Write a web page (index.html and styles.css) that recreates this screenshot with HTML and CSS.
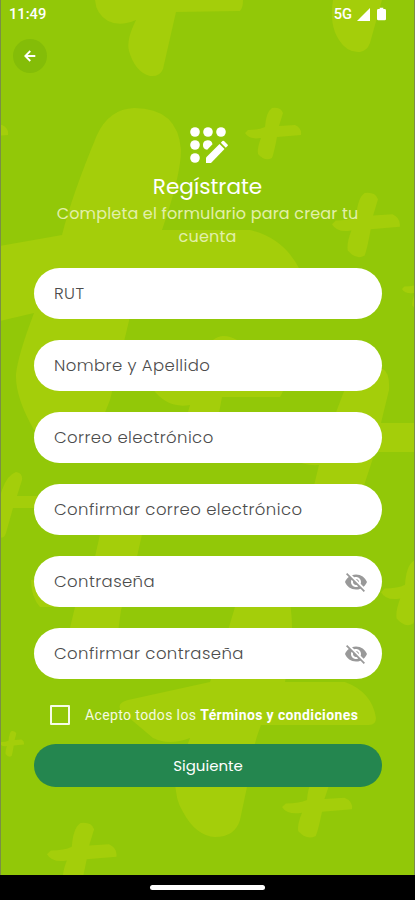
FILE: index.html
```html
<!DOCTYPE html>
<html lang="es">
<head>
    <meta charset="UTF-8">
    <meta name="viewport" content="width=device-width, initial-scale=1.0">
    <title>Regístrate</title>
    <link rel="stylesheet" href="styles.css">
</head>
<body>
    <div class="screen">
        <!-- background pattern -->
        <svg class="pattern" viewBox="0 0 415 875" aria-hidden="true">
            <defs>
                <path id="plus" d="M0 25L3 22Q14 22 20 19Q21 4 27 0Q36-1 38 5L34 18L50 17Q57 20 56 27L32 29Q29 45 27 50Q20 54 13 46Q12 40 16 30Q4 32 0 25Z"/>
            </defs>
            <path d="M95 0Q96 14 108 21Q120 27 136 20Q126 40 129 51Q135 72 150 76Q160 77 163 69L176 12L240 11Q243 8 243 0Z"/>
            <path d="M333 0Q329 25 339 40Q347 53 360 52Q367 51 370 43L382 0Z"/>
            <path d="M0 246L62 235Q72 195 97 135Q109 109 134 108Q178 108 181 150Q181 175 162 230L250 230Q284 238 300 270L300 300L134 300L110 400L98 430H34Q15 397 16 374Q18 355 34 313L0 321Z"/>
            <path d="M213 340Q223 332 237 340L228 364L276 364Q292 376 280 397L222 397L214 440H180L190 405Q167 409 152 388L150 370L202 364Z"/>
            <path d="M346 386Q360 367 383 369Q390 373 389 390L381 423H415V452H375L356 510H308L319 465Q305 466 294 460L290 430L332 423Z"/>
            <path d="M2 490Q7 475 16 472Q23 473 22 480L17 496H40V508H13L6 533Q4 539 0 537V497Z"/>
            <path d="M101 530L143 530L134 570L121 610L117 640H67L75 607H40Q31 597 31 580L92 570Z"/>
            <path d="M240 590H287Q293 610 292 640L285 682H345Q372 692 376 718Q376 725 369 725H261Q251 750 247 787L240 820Q235 837 215 837Q196 836 183 812Q175 800 175 778L190 738Q169 746 153 738L121 711Q116 703 128 700L210 682L229 627Z"/>
            <use href="#plus" x="245" y="108"/>
            <use href="#plus" transform="translate(332 193) scale(1.21 1.25)"/>
            <use href="#plus" transform="translate(282 778) scale(1.25 1.16)"/>
            <use href="#plus" transform="translate(47 823) scale(1.24 1.25)"/>
            <use href="#plus" transform="translate(0 731) scale(.43 .5)"/>
            <use href="#plus" transform="translate(381 561) scale(1.2 1.25)"/>
            <use href="#plus" transform="translate(402 269) scale(.8)"/>
            <use href="#plus" transform="translate(-48 108)"/>
        </svg>

        <div class="status-bar">
            <span class="time">11:49</span>
            <div class="status-icons">
                <span>5G</span>
                <svg class="signal" viewBox="0 0 13 13"><path d="M13 0V13H0Z"/></svg>
                <svg class="battery" viewBox="0 0 10 14"><path d="M3 0H7V1.5H8.5Q10 1.5 10 3V12.5Q10 14 8.5 14H1.5Q0 14 0 12.5V3Q0 1.5 1.5 1.5H3Z"/></svg>
            </div>
        </div>

        <button class="back" aria-label="Volver">
            <svg viewBox="0 0 12 12"><path d="M11.3 6H1.5M6.3 1L1.3 6L6.3 11"/></svg>
        </button>

        <div class="header">
            <svg class="logo" viewBox="0 0 38 37">
                <circle cx="5" cy="5" r="4.8"/>
                <circle cx="18" cy="5" r="4.8"/>
                <circle cx="31" cy="5" r="4.8"/>
                <circle cx="5" cy="18" r="4.8"/>
                <path d="M22.5 17.2L17.2 22.7A4.8 4.8 0 1 1 22.5 17.2Z"/>
                <circle cx="5" cy="31" r="4.8"/>
                <path d="M16 30.5L29.5 17L34.5 22L21 36H16Z"/>
                <path d="M30.8 15.7L32.4 14Q33.2 13.3 34 14L37.5 17.4Q38.3 18.2 37.5 19L35.8 20.7Z"/>
            </svg>
            <h1>Regístrate</h1>
            <p>Completa el formulario para crear tu<br>cuenta</p>
        </div>

        <form class="form">
            <div class="field">
                <input type="text" placeholder="RUT">
            </div>
            <div class="field">
                <input type="text" placeholder="Nombre y Apellido">
            </div>
            <div class="field">
                <input type="text" placeholder="Correo electrónico">
            </div>
            <div class="field">
                <input type="text" placeholder="Confirmar correo electrónico">
            </div>
            <div class="field">
                <input type="password" placeholder="Contraseña">
                <svg class="eye" viewBox="0 0 24 24"><path d="M12 7c2.76 0 5 2.24 5 5 0 .65-.13 1.26-.36 1.83l2.92 2.92c1.51-1.26 2.7-2.89 3.43-4.75-1.73-4.39-6-7.5-11-7.5-1.4 0-2.74.25-3.98.7l2.16 2.16C10.74 7.13 11.35 7 12 7zM2 4.27l2.28 2.28.46.46C3.08 8.3 1.78 10.02 1 12c1.73 4.39 6 7.5 11 7.5 1.55 0 3.03-.3 4.38-.84l.42.42L19.73 22 21 20.73 3.27 3 2 4.27zM7.53 9.8l1.55 1.55c-.05.21-.08.43-.08.65 0 1.66 1.34 3 3 3 .22 0 .44-.03.65-.08l1.55 1.55c-.67.33-1.41.53-2.2.53-2.76 0-5-2.24-5-5 0-.79.2-1.53.53-2.2zm4.31-.78l3.15 3.15.02-.16c0-1.66-1.34-3-3-3l-.17.01z"/></svg>
            </div>
            <div class="field">
                <input type="password" placeholder="Confirmar contraseña">
                <svg class="eye" viewBox="0 0 24 24"><path d="M12 7c2.76 0 5 2.24 5 5 0 .65-.13 1.26-.36 1.83l2.92 2.92c1.51-1.26 2.7-2.89 3.43-4.75-1.73-4.39-6-7.5-11-7.5-1.4 0-2.74.25-3.98.7l2.16 2.16C10.74 7.13 11.35 7 12 7zM2 4.27l2.28 2.28.46.46C3.08 8.3 1.78 10.02 1 12c1.73 4.39 6 7.5 11 7.5 1.55 0 3.03-.3 4.38-.84l.42.42L19.73 22 21 20.73 3.27 3 2 4.27zM7.53 9.8l1.55 1.55c-.05.21-.08.43-.08.65 0 1.66 1.34 3 3 3 .22 0 .44-.03.65-.08l1.55 1.55c-.67.33-1.41.53-2.2.53-2.76 0-5-2.24-5-5 0-.79.2-1.53.53-2.2zm4.31-.78l3.15 3.15.02-.16c0-1.66-1.34-3-3-3l-.17.01z"/></svg>
            </div>
            <label class="terms">
                <input type="checkbox">
                <span>Acepto todos los <b>Términos y condiciones</b></span>
            </label>
            <button class="submit" type="button">Siguiente</button>
        </form>
    </div>
    <div class="nav-bar">
        <div class="handle"></div>
    </div>
</body>
</html>
```
FILE: styles.css
```css
* {
    box-sizing: border-box;
}

body {
    margin: 0;
    height: 900px;
    display: flex;
    flex-direction: column;
    font-family: Poppins, Inter, sans-serif;
    background: #000;
    overflow: hidden;
}

.screen {
    position: relative;
    height: 875px;
    background: #92c808;
    border-left: 1px solid #7a8f45;
    border-right: 1px solid #7a8f45;
    overflow: hidden;
    isolation: isolate;
}

.pattern {
    position: absolute;
    top: 0;
    left: -1px;
    width: 415px;
    height: 875px;
    fill: #a4ce0a;
    z-index: -1;
}

.status-bar {
    display: flex;
    justify-content: space-between;
    align-items: center;
    height: 27px;
    padding: 1px 28px 0 8px;
    color: #fff;
    font: 500 14.7px/26px Roboto, sans-serif;
}

.status-icons {
    display: flex;
    align-items: center;
    gap: 5px;
}

.status-icons svg {
    fill: #fff;
}

.signal {
    width: 13px;
    height: 13px;
}

.battery {
    width: 9px;
    height: 14px;
    margin-left: 2px;
}

.back {
    display: flex;
    align-items: center;
    justify-content: center;
    width: 34px;
    height: 34px;
    margin: 12px 0 0 12px;
    padding: 0;
    border: none;
    border-radius: 50%;
    background: #84bd08;
}

.back svg {
    width: 12px;
    height: 12px;
    fill: none;
    stroke: #fff;
    stroke-width: 1.8;
}

.header {
    display: flex;
    flex-direction: column;
    align-items: center;
    margin-top: 54px;
    text-align: center;
    color: #fff;
}

.logo {
    width: 38px;
    height: 37px;
    margin-left: 3px;
    fill: #fff;
}

.header h1 {
    margin: 8px 0 0;
    font-size: 21.6px;
    font-weight: 400;
    line-height: 30px;
}

.header p {
    margin: 0;
    color: #e2f0aa;
    font-size: 16px;
    line-height: 23px;
    letter-spacing: 0.17px;
}

.form {
    display: flex;
    flex-direction: column;
    gap: 21px;
    margin: 20px 32px 0 33px;
}

.field {
    display: flex;
    align-items: center;
    height: 51px;
    padding: 0 14px 0 20px;
    border-radius: 26px;
    background: #fff;
}

.field input {
    flex: 1;
    min-width: 0;
    padding: 0;
    border: none;
    outline: none;
    background: transparent;
    font-family: inherit;
    font-size: 16.5px;
    font-weight: 300;
    letter-spacing: 0.4px;
}

.field input::placeholder {
    color: #4c4c4c;
    opacity: 1;
}

.eye {
    width: 24px;
    height: 24px;
    fill: #999;
}

.terms {
    display: flex;
    align-items: center;
    gap: 15px;
    height: 30px;
    padding-left: 16px;
    color: #f5fae0;
    font: 400 14px/20px Roboto, sans-serif;
    letter-spacing: 0.38px;
}

.terms input {
    appearance: none;
    width: 20px;
    height: 20px;
    margin: 0;
    border: 2px solid #f5fbe6;
    border-radius: 1px;
}

.terms b {
    color: #fff;
    font-weight: 700;
}

.submit {
    height: 43px;
    margin-top: -7px;
    border: none;
    border-radius: 22px;
    background: #24864f;
    color: #fff;
    font-family: inherit;
    font-size: 15px;
}

.nav-bar {
    display: flex;
    justify-content: center;
    align-items: center;
    height: 25px;
}

.handle {
    width: 115px;
    height: 5px;
    border-radius: 3px;
    background: #fff;
}
```
